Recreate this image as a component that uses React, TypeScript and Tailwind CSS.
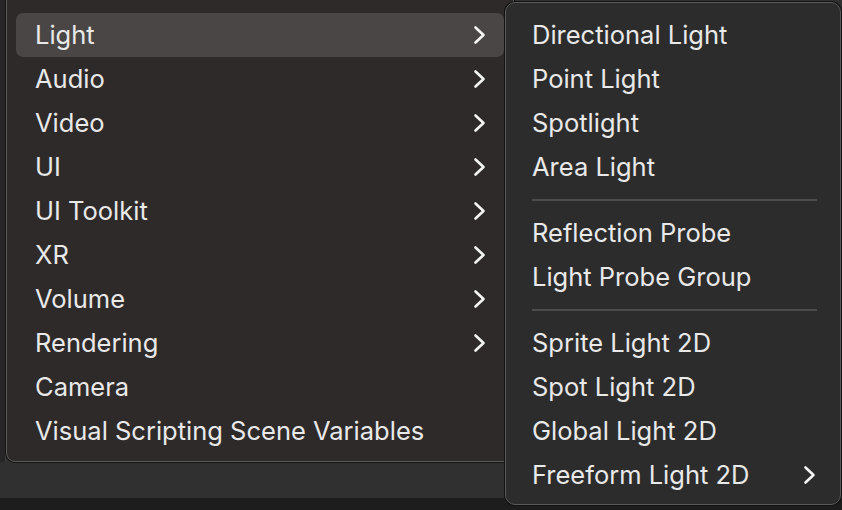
import React from "react";

type Item = { label: string; sub?: boolean; highlighted?: boolean } | "sep";

const mainItems: Item[] = [
  { label: "Light", sub: true, highlighted: true },
  { label: "Audio", sub: true },
  { label: "Video", sub: true },
  { label: "UI", sub: true },
  { label: "UI Toolkit", sub: true },
  { label: "XR", sub: true },
  { label: "Volume", sub: true },
  { label: "Rendering", sub: true },
  { label: "Camera" },
  { label: "Visual Scripting Scene Variables" },
];

const lightItems: Item[] = [
  { label: "Directional Light" },
  { label: "Point Light" },
  { label: "Spotlight" },
  { label: "Area Light" },
  "sep",
  { label: "Reflection Probe" },
  { label: "Light Probe Group" },
  "sep",
  { label: "Sprite Light 2D" },
  { label: "Spot Light 2D" },
  { label: "Global Light 2D" },
  { label: "Freeform Light 2D", sub: true },
];

function Chevron() {
  return (
    <svg width="14" height="20" viewBox="0 0 14 20" fill="none">
      <polyline
        points="2.5,2.5 10.5,10 2.5,17.5"
        stroke="#f4f4f4"
        strokeWidth="2.6"
        strokeLinecap="round"
        strokeLinejoin="round"
      />
    </svg>
  );
}

function MenuRows({
  items,
  padL,
  chevronPad,
}: {
  items: Item[];
  padL: string;
  chevronPad: string;
}) {
  return (
    <>
      {items.map((it, i) =>
        it === "sep" ? (
          <div key={i} className="flex h-[22px] items-center pl-[16px] pr-[13px]">
            <div className="h-[2px] w-full bg-[#4c4c4c]" />
          </div>
        ) : (
          <div
            key={i}
            className={`flex h-[44px] items-center justify-between rounded-[7px] ${padL} ${chevronPad} ${
              it.highlighted ? "bg-[#4a4645]" : ""
            }`}
          >
            <span className="whitespace-nowrap">{it.label}</span>
            {it.sub && <Chevron />}
          </div>
        )
      )}
    </>
  );
}

export default function App() {
  return (
    <div
      className="relative flex h-[510px] w-[842px] flex-col overflow-hidden bg-[#303030] text-[25.5px] text-[#e9e9e9]"
      style={{ fontFamily: "Inter, 'Noto Sans', sans-serif" }}
    >
      <div className="flex h-[498px] bg-[#303030]">
        <div className="h-[462px] w-[6px] border-r border-[#3c3c3c] bg-[#262626]" />
        <div className="mt-[-40px] h-[502px] w-[508px] rounded-b-[9px] border border-[#5c5a59] bg-[#2e2a29] px-[9px] pt-[8px] pb-[8px] shadow-[0_0_0_1px_#141414]">
          <div className="h-[44px]" />
          <MenuRows items={mainItems} padL="pl-[19px]" chevronPad="pr-[17px]" />
        </div>
      </div>
      <div className="h-[12px] bg-[#1d1d1d]" />

      <div className="absolute left-[505px] top-[2px] h-[503px] w-[336px] rounded-[10px] border border-[#5a5a5a] bg-[#2c2c2c] px-[10px] pt-[10px] shadow-[0_0_0_1px_#121212]">
        <MenuRows items={lightItems} padL="pl-[16px]" chevronPad="pr-[13px]" />
      </div>
    </div>
  );
}
